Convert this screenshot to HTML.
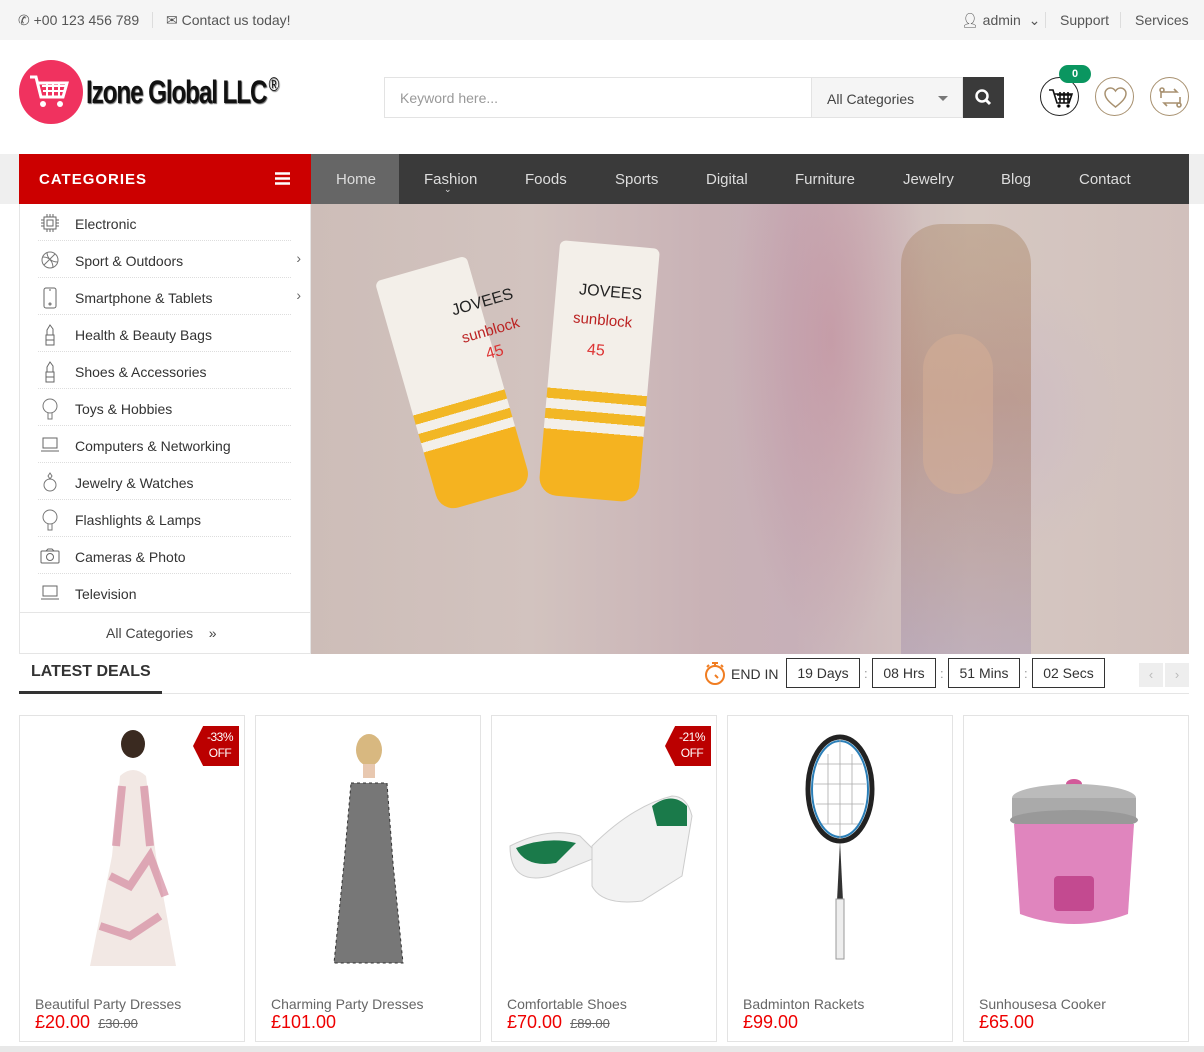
<!DOCTYPE html>
<html><head><meta charset="utf-8"><style>
*{box-sizing:border-box;margin:0;padding:0}
body{width:1204px;height:1052px;overflow:hidden;background:#fff;font-family:"Liberation Sans",Arial,sans-serif;color:#333;position:relative}
.abs{position:absolute}
.top{left:0;top:0;width:1204px;height:40px;background:#f5f5f5;font-size:14px;color:#555}
.nav{left:0;top:154px;width:1204px;height:50px;background:#efefef}
.cat{left:19px;top:154px;width:292px;height:50px;background:#cc0000;color:#fff;font-weight:bold;font-size:15px;letter-spacing:1px;padding:17px 20px}
.menu{left:311px;top:154px;width:878px;height:50px;background:#3a3a3a}
.menu span{position:absolute;top:17px;color:#ddd;font-size:15px}
.side{left:19px;top:204px;width:292px;height:450px;border:1px solid #e5e5e5;border-top:0;background:#fff}
.item{position:absolute;left:18px;width:253px;height:37px;border-bottom:1px dotted #ddd;font-size:14px;color:#333}
.item span{position:absolute;left:37px;top:12px}
.item svg{position:absolute;left:2px;top:9px}
.item i{position:absolute;right:-10px;top:9px;font-style:normal;color:#666}
.card{position:absolute;top:715px;width:226px;height:327px;border:1px solid #e3e3e3;background:#fff}
.card .n{position:absolute;left:15px;top:274px;font-size:14px;color:#666}
.card .p{position:absolute;left:15px;top:296px;font-size:18px;color:#e00}
.card .p s{font-size:13px;color:#666;margin-left:8px}
.badge{position:absolute;right:5px;top:10px;width:46px;height:40px;background:#b00;color:#fff;font-size:12px;text-align:center;line-height:16px;padding-top:3px;clip-path:polygon(22% 0,100% 0,100% 100%,22% 100%,0 50%);padding-left:8px;letter-spacing:-.5px}
.box{position:absolute;top:658px;height:30px;border:1px solid #333;font-size:14px;text-align:center;line-height:28px;color:#333}
</style></head><body>
<div class="abs top">
 <span class="abs" style="left:18px;top:12px">&#9990; +00 123 456 789</span>
 <span class="abs" style="left:152px;top:12px;width:1px;height:16px;background:#ddd"></span>
 <span class="abs" style="left:166px;top:12px">&#9993; Contact us today!</span>
 <span class="abs" style="left:961px;top:12px">&#128100;&#xFE0E; admin &nbsp;&#8964;</span>
 <span class="abs" style="left:1045px;top:12px;width:1px;height:16px;background:#ddd"></span>
 <span class="abs" style="left:1060px;top:12px">Support</span>
 <span class="abs" style="left:1120px;top:12px;width:1px;height:16px;background:#ddd"></span>
 <span class="abs" style="left:1135px;top:12px">Services</span>
</div>
<!-- logo -->
<div class="abs" style="left:19px;top:60px;width:64px;height:64px;border-radius:50%;background:#f0325f"></div>
<svg class="abs" style="left:28px;top:74px" width="44" height="36" viewBox="0 0 44 36"><path d="M2 3h6l5 20h22l4-14H10" fill="none" stroke="#fff" stroke-width="3"/><path d="M14 12h23M15 17h21M19 9v13M25 9v13M31 9v13" stroke="#fff" stroke-width="2"/><circle cx="15" cy="30" r="3" fill="#fff"/><circle cx="32" cy="30" r="3" fill="#fff"/></svg>
<div class="abs" style="left:86px;top:74px;font-size:32px;font-weight:bold;color:#111;letter-spacing:-1.5px;transform:scaleX(.76);transform-origin:left;text-shadow:1px 1px 1px #666;white-space:nowrap">Izone Global LLC<sup style="font-size:19px;font-weight:normal;margin-left:3px">®</sup></div>
<!-- search -->
<div class="abs" style="left:384px;top:77px;width:428px;height:41px;border:1px solid #e3e3e3;font-size:14px;color:#999;padding:12px 15px">Keyword here...</div>
<div class="abs" style="left:811px;top:77px;width:152px;height:41px;border:1px solid #e3e3e3;background:#f5f5f5;font-size:14px;color:#444;padding:13px 15px">All Categories<span style="position:absolute;right:14px;top:18px;border:5px solid transparent;border-top-color:#777"></span></div>
<div class="abs" style="left:963px;top:77px;width:41px;height:41px;background:#3a3a3a"><svg width="41" height="41"><circle cx="19" cy="19" r="5.5" fill="none" stroke="#fff" stroke-width="2.5"/><path d="M23 23l4 4" stroke="#fff" stroke-width="3"/></svg></div>
<div class="abs" style="left:1040px;top:77px;width:39px;height:39px;border:1px solid #222;border-radius:50%"><svg width="39" height="39"><path d="M8 12h4l4 13h12l3-9H13M16 17h14M17 21h12M19 14v11M23 14v11M27 14v11" fill="none" stroke="#111" stroke-width="1.6"/><circle cx="18" cy="28" r="1.6"/><circle cx="27" cy="28" r="1.6"/></svg></div>
<div class="abs" style="left:1059px;top:65px;width:32px;height:18px;border-radius:9px;background:#0a9660;color:#fff;font-size:11px;font-weight:bold;text-align:center;line-height:18px">0</div>
<div class="abs" style="left:1095px;top:77px;width:39px;height:39px;border:1px solid #a89170;border-radius:50%"><svg width="39" height="39"><path d="M19.5 29C13 24 9 20 9 15.5 9 12 12 10 14.5 10c2.5 0 4 1.5 5 3 1-1.5 2.5-3 5-3C27 10 30 12 30 15.5 30 20 26 24 19.5 29z" fill="none" stroke="#a89170" stroke-width="1.5"/></svg></div>
<div class="abs" style="left:1150px;top:77px;width:39px;height:39px;border:1px solid #a89170;border-radius:50%"><svg width="39" height="39" fill="none" stroke="#a89170" stroke-width="1.6"><path d="M10 20v-6h16l-3-3M29 19v6H13l3 3"/><circle cx="11" cy="12" r="2"/><circle cx="28" cy="27" r="2"/></svg></div>
<!-- nav -->
<div class="abs nav"></div>
<div class="abs cat">CATEGORIES<svg style="position:absolute;right:21px;top:18px" width="15" height="13"><path d="M0 1.5h15M0 6.5h15M0 11.5h15" stroke="#fff" stroke-width="2.6"/></svg></div>
<div class="abs menu">
 <div style="position:absolute;left:0;top:0;width:88px;height:50px;background:#666"></div>
 <span style="left:25px">Home</span><span style="left:113px">Fashion</span><span style="left:133px;top:30px;font-size:9px">&#8964;</span><span style="left:214px">Foods</span><span style="left:304px">Sports</span><span style="left:395px">Digital</span><span style="left:484px">Furniture</span><span style="left:592px">Jewelry</span><span style="left:690px">Blog</span><span style="left:768px">Contact</span>
</div>
<!-- sidebar -->
<div class="abs side">
 <div class="item" style="top:0"><svg width="20" height="20" fill="none" stroke="#666"><rect x="4" y="4" width="12" height="12"/><rect x="7" y="7" width="6" height="6"/><path d="M1 7h3M1 10h3M1 13h3M16 7h3M16 10h3M16 13h3M7 1v3M10 1v3M13 1v3M7 16v3M10 16v3M13 16v3"/></svg><span>Electronic</span></div>
 <div class="item" style="top:37px"><svg width="20" height="20" fill="none" stroke="#777"><circle cx="10" cy="10" r="8"/><path d="M3 7c6 0 10 4 10 11M7 2c0 6 4 10 11 10M4 15l11-11"/></svg><span>Sport &amp; Outdoors</span><i>›</i></div>
 <div class="item" style="top:74px"><svg width="20" height="22" fill="none" stroke="#666"><rect x="4" y="1" width="12" height="20" rx="2"/><path d="M9 3h2"/><circle cx="10" cy="17" r="1"/></svg><span>Smartphone &amp; Tablets</span><i>›</i></div>
 <div class="item" style="top:111px"><svg width="20" height="22" fill="none" stroke="#666"><path d="M6 21V11h8v10zM7 11V6l3-5 3 4v6M6 16h8"/></svg><span>Health &amp; Beauty Bags</span></div>
 <div class="item" style="top:148px"><svg width="20" height="22" fill="none" stroke="#666"><path d="M6 21V11h8v10zM7 11V6l3-5 3 4v6M6 16h8"/></svg><span>Shoes &amp; Accessories</span></div>
 <div class="item" style="top:185px"><svg width="20" height="22" fill="none" stroke="#777"><circle cx="10" cy="8" r="7"/><path d="M8 15v6h4v-6"/></svg><span>Toys &amp; Hobbies</span></div>
 <div class="item" style="top:222px"><svg width="20" height="20" fill="none" stroke="#666"><rect x="3" y="3" width="14" height="10"/><path d="M1 16h18"/></svg><span>Computers &amp; Networking</span></div>
 <div class="item" style="top:259px"><svg width="20" height="22" fill="none" stroke="#777"><circle cx="10" cy="13" r="6"/><path d="M8 4l2-3 2 3-2 3z"/></svg><span>Jewelry &amp; Watches</span></div>
 <div class="item" style="top:296px"><svg width="20" height="22" fill="none" stroke="#777"><circle cx="10" cy="8" r="7"/><path d="M8 15v6h4v-6"/></svg><span>Flashlights &amp; Lamps</span></div>
 <div class="item" style="top:333px"><svg width="20" height="20" fill="none" stroke="#666"><rect x="1" y="5" width="18" height="12" rx="1"/><circle cx="10" cy="11" r="3.5"/><path d="M6 5l2-2h4l2 2"/></svg><span>Cameras &amp; Photo</span></div>
 <div class="item" style="top:370px;border:0"><svg width="20" height="20" fill="none" stroke="#666"><rect x="3" y="3" width="14" height="10"/><path d="M1 16h18"/></svg><span>Television</span></div>
 <div style="position:absolute;left:0;top:408px;width:290px;height:1px;background:#e5e5e5"></div>
 <div style="position:absolute;left:86px;top:421px;font-size:14px;color:#444">All Categories &nbsp;&nbsp;&nbsp;»</div>
</div>
<!-- banner -->
<div class="abs" style="left:311px;top:204px;width:878px;height:450px;background:linear-gradient(90deg,#cdbdb8 0%,#d2c3bf 25%,#c9b2b6 45%,#c7b0b8 55%,#d6c8c2 75%,#d1c0bc 100%);overflow:hidden">
 <div class="abs" style="left:420px;top:0;width:200px;height:450px;background:radial-gradient(ellipse at 50% 30%,rgba(190,120,140,.4),transparent 70%)"></div>
 <div class="abs" style="left:570px;top:60px;width:240px;height:300px;background:radial-gradient(ellipse,rgba(200,180,200,.5),transparent 70%)"></div>
 <div class="abs" style="left:590px;top:20px;width:130px;height:430px;background:linear-gradient(180deg,rgba(160,120,80,.35),rgba(165,115,85,.45) 40%,rgba(150,130,170,.35));border-radius:40px 40px 0 0"></div>
 <div class="abs" style="left:612px;top:130px;width:70px;height:160px;background:rgba(215,175,150,.5);border-radius:35px"></div>
 <div class="abs" style="left:95px;top:60px;width:95px;height:240px;background:linear-gradient(180deg,#f3efe9 0,#f3efe9 58%,#f2b725 58%,#f2b725 62%,#f3efe9 62%,#f3efe9 66%,#f2b725 66%,#f2b725 70%,#f3efe9 70%,#f3efe9 74%,#f5b320 74%);transform:rotate(-16deg);border-radius:6px 6px 18px 18px"></div>
 <div class="abs" style="left:238px;top:40px;width:100px;height:255px;background:linear-gradient(180deg,#f3efe9 0,#f3efe9 58%,#f2b725 58%,#f2b725 62%,#f3efe9 62%,#f3efe9 66%,#f2b725 66%,#f2b725 70%,#f3efe9 70%,#f3efe9 74%,#f5b320 74%);transform:rotate(5deg);border-radius:6px 6px 18px 18px"></div>
 <div class="abs" style="left:140px;top:90px;font-size:16px;transform:rotate(-16deg);color:#222">JOVEES</div>
 <div class="abs" style="left:268px;top:80px;font-size:16px;transform:rotate(5deg);color:#222">JOVEES</div>
 <div class="abs" style="left:150px;top:118px;font-size:15px;transform:rotate(-16deg);color:#b22">sunblock</div>
 <div class="abs" style="left:262px;top:108px;font-size:15px;transform:rotate(5deg);color:#b22">sunblock</div>
 <div class="abs" style="left:175px;top:140px;font-size:16px;transform:rotate(-16deg);color:#d33">45</div>
 <div class="abs" style="left:276px;top:138px;font-size:16px;transform:rotate(5deg);color:#d33">45</div>
</div>
<!-- deals -->
<div class="abs" style="left:31px;top:663px;font-size:16px;font-weight:bold;color:#333">LATEST DEALS</div>
<div class="abs" style="left:19px;top:693px;width:1170px;height:1px;background:#e5e5e5"></div>
<div class="abs" style="left:19px;top:691px;width:143px;height:3px;background:#333"></div>
<svg class="abs" style="left:703px;top:660px" width="24" height="26" fill="none" stroke="#f07d22" stroke-width="2"><circle cx="12" cy="15" r="9"/><path d="M9 3h6M12 3v3M12 15l3 3M4 7l2-2M20 7l-2-2"/></svg>
<div class="abs" style="left:731px;top:666px;font-size:14px;color:#333">END IN</div>
<div class="box" style="left:786px;width:74px">19 Days</div><span class="abs" style="left:864px;top:666px;font-size:13px;color:#999">:</span>
<div class="box" style="left:872px;width:64px">08 Hrs</div><span class="abs" style="left:940px;top:666px;font-size:13px;color:#999">:</span>
<div class="box" style="left:948px;width:72px">51 Mins</div><span class="abs" style="left:1024px;top:666px;font-size:13px;color:#999">:</span>
<div class="box" style="left:1032px;width:73px">02 Secs</div>
<div class="abs" style="left:1139px;top:663px;width:24px;height:24px;background:#eee;color:#bbb;text-align:center;line-height:24px;font-size:13px">‹</div>
<div class="abs" style="left:1165px;top:663px;width:24px;height:24px;background:#eee;color:#bbb;text-align:center;line-height:24px;font-size:13px">›</div>
<!-- cards -->
<div class="card" style="left:19px">
 <svg class="abs" style="left:60px;top:10px" width="110" height="250"><ellipse cx="53" cy="18" rx="12" ry="14" fill="#3a2a20"/><path d="M40 50q13-12 26 0l10 80 20 110H10l22-110z" fill="#f2e8e4"/><path d="M42 60l-6 60M64 60l6 60M30 150l20 10 20-30 15 40M20 200l30 10 30-20" stroke="#d48aa0" stroke-width="8" fill="none" opacity=".7"/></svg>
 <div class="badge">-33%<br>OFF</div>
 <div class="n" style="top:280px">Beautiful Party Dresses</div><div class="p">£20.00<s>£30.00</s></div>
</div>
<div class="card" style="left:255px">
 <svg class="abs" style="left:60px;top:12px" width="110" height="250"><ellipse cx="53" cy="22" rx="13" ry="16" fill="#d8b880"/><rect x="47" y="36" width="12" height="14" fill="#e8c8b0"/><path d="M35 55h36l6 80 10 100H18l10-100z" fill="#777"/><path d="M35 55h36l6 80 10 100H18l10-100z" fill="none" stroke="#333" stroke-width="1" stroke-dasharray="3 3"/></svg>
 <div class="n" style="top:280px">Charming Party Dresses</div><div class="p">£101.00</div>
</div>
<div class="card" style="left:491px">
 <svg class="abs" style="left:10px;top:70px" width="200" height="130"><path d="M8 60q40-20 70-10l20 20-50 20q-40 10-40-30z" fill="#eee" stroke="#ccc"/><path d="M14 62q30-12 60-5l-20 20q-30 5-40-15z" fill="#1a7a4a"/><path d="M90 60q40-40 80-50 15 0 20 20l-10 60-40 25q-40 5-50-15z" fill="#f2f2f2" stroke="#ccc"/><path d="M150 20q20-15 35 0v20l-30 0z" fill="#1a7a4a"/></svg>
 <div class="badge">-21%<br>OFF</div>
 <div class="n" style="top:280px">Comfortable Shoes</div><div class="p">£70.00<s>£89.00</s></div>
</div>
<div class="card" style="left:727px">
 <svg class="abs" style="left:70px;top:18px" width="80" height="230"><ellipse cx="42" cy="55" rx="32" ry="52" fill="none" stroke="#222" stroke-width="5"/><ellipse cx="42" cy="55" rx="28" ry="48" fill="none" stroke="#2b7fb8" stroke-width="2"/><path d="M20 30h44M16 50h52M18 70h48M24 90h36M30 20v70M42 5v100M54 20v70" stroke="#aaa" stroke-width=".8"/><path d="M42 107l-3 60h6z" fill="#333"/><rect x="38" y="165" width="8" height="60" fill="#eee" stroke="#999"/></svg>
 <div class="n" style="top:280px">Badminton Rackets</div><div class="p">£99.00</div>
</div>
<div class="card" style="left:963px">
 <svg class="abs" style="left:30px;top:60px" width="165" height="160"><ellipse cx="80" cy="8" rx="8" ry="5" fill="#d25a9a"/><ellipse cx="80" cy="22" rx="62" ry="14" fill="#bbb"/><rect x="18" y="22" width="124" height="22" fill="#aaa"/><ellipse cx="80" cy="44" rx="64" ry="10" fill="#999"/><path d="M20 48h120l-6 90q-54 20-108 0z" fill="#e085be"/><rect x="60" y="100" width="40" height="35" rx="4" fill="#c34a90"/></svg>
 <div class="n" style="top:280px">Sunhousesa Cooker</div><div class="p">£65.00</div>
</div>
<div class="abs" style="left:0;top:1046px;width:1204px;height:6px;background:#e8e8e8"></div>
</body></html>
